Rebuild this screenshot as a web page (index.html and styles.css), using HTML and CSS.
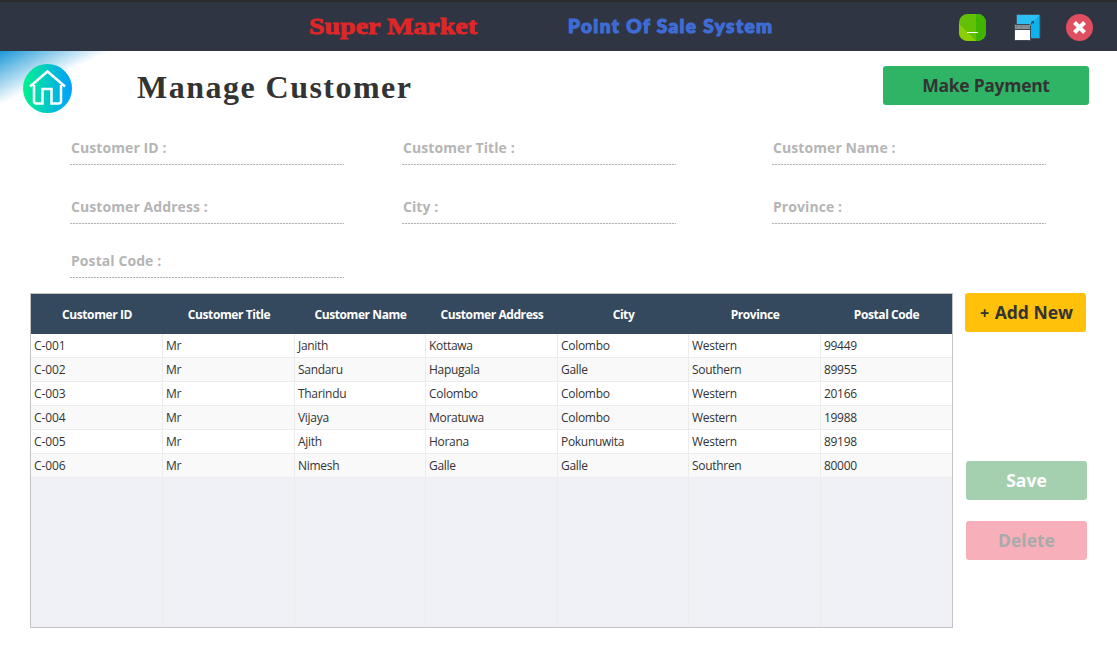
FILE: index.html
```html
<!DOCTYPE html>
<html lang="en">
<head>
<meta charset="utf-8">
<title>Manage Customer</title>
<link rel="stylesheet" href="styles.css">
</head>
<body>
<header class="topbar">
  <svg class="brand" width="180" height="44" viewBox="0 0 180 44"><text class="brand-name" x="1" y="27" textLength="168" lengthAdjust="spacingAndGlyphs">Super Market</text></svg>
  <svg class="tagline" width="215" height="44" viewBox="0 0 215 44"><text class="tagline-text" x="1" y="26" textLength="204" lengthAdjust="spacing">Point Of Sale System</text></svg>
  <div class="window-buttons">
    <svg width="27" height="27" viewBox="0 0 27 27">
      <defs><clipPath id="round"><rect width="27" height="27" rx="8.5"/></clipPath></defs>
      <g clip-path="url(#round)">
        <rect width="27" height="27" fill="#64c005"/>
        <path d="M0 10L17 27H0Z" fill="#8bd000"/>
        <path d="M17 0H27V27H17Z" fill="#3fb500"/>
      </g>
      <rect x="8" y="18" width="11" height="1" fill="#fff"/>
    </svg>
    <svg class="restore" width="27" height="27" viewBox="0 0 27 27">
      <defs><linearGradient id="sky" x1="0" y1="0" x2="1" y2="1"><stop offset=".5" stop-color="#2bc0f3"/><stop offset=".5" stop-color="#0cb2ee"/></linearGradient></defs>
      <rect x="2.500" y=".5" width="23.500" height="24" rx="1" fill="url(#sky)" stroke="#3f5364"/>
      <path d="M17 10l2-2" fill="none" stroke="#34495e" stroke-width="1.200"/>
      <path d="M17 7h3v3Z" fill="#34495e"/>
      <rect x=".5" y="10.500" width="16" height="16" rx="1" fill="#fff" stroke="#3e4650"/>
      <path d="M1 11h15v4H1Z" fill="#858e96"/>
      <path d="M1 15.500h15" stroke="#3e4650"/>
      <path d="M2 12.500h1M7 12.500h1" stroke="#5a636c"/>
    </svg>
    <svg width="27" height="27" viewBox="0 0 27 27">
      <circle cx="13.500" cy="13.500" r="13.500" fill="#e04f5f"/>
      <path d="M8.500 8.500l10 10M18.500 8.500l-10 10" stroke="#fff" stroke-width="4"/>
    </svg>
  </div>
</header>

<main class="page">
  <div class="title-row">
    <svg class="home" width="49" height="49" viewBox="0 0 49 49">
      <defs><linearGradient id="home-fill"><stop offset="0" stop-color="#00f38d"/><stop offset="1" stop-color="#009eff"/></linearGradient></defs>
      <circle cx="24.500" cy="24.500" r="24.500" fill="url(#home-fill)"/>
      <path d="M7 22.500L24.500 7.500L42 22.500M11 21v16q0 2.500 2.500 2.500h6V25h9v14.500h7q2.500 0 2.500-2.500V21" fill="none" stroke="#fff" stroke-width="2.500"/>
    </svg>
    <h1 class="title"><svg width="290" height="50" viewBox="0 0 290 50"><text class="title-text" x="0" y="35" textLength="274" lengthAdjust="spacing">Manage Customer</text></svg></h1>
    <button class="btn btn-pay">Make Payment</button>
  </div>

  <form class="fields">
    <label class="field">Customer ID :</label>
    <label class="field">Customer Title :</label>
    <label class="field">Customer Name :</label>
    <label class="field">Customer Address :</label>
    <label class="field">City :</label>
    <label class="field">Province :</label>
    <label class="field">Postal Code :</label>
  </form>

  <div class="content">
    <div class="table">
      <div class="row head"><span>Customer ID</span><span>Customer Title</span><span>Customer Name</span><span>Customer Address</span><span>City</span><span>Province</span><span>Postal Code</span></div>
      <div class="row"><span>C-001</span><span>Mr</span><span>Janith</span><span>Kottawa</span><span>Colombo</span><span>Western</span><span>99449</span></div>
      <div class="row alt"><span>C-002</span><span>Mr</span><span>Sandaru</span><span>Hapugala</span><span>Galle</span><span>Southern</span><span>89955</span></div>
      <div class="row"><span>C-003</span><span>Mr</span><span>Tharindu</span><span>Colombo</span><span>Colombo</span><span>Western</span><span>20166</span></div>
      <div class="row alt"><span>C-004</span><span>Mr</span><span>Vijaya</span><span>Moratuwa</span><span>Colombo</span><span>Western</span><span>19988</span></div>
      <div class="row"><span>C-005</span><span>Mr</span><span>Ajith</span><span>Horana</span><span>Pokunuwita</span><span>Western</span><span>89198</span></div>
      <div class="row alt"><span>C-006</span><span>Mr</span><span>Nimesh</span><span>Galle</span><span>Galle</span><span>Southren</span><span>80000</span></div>
      <div class="row empty"><span></span><span></span><span></span><span></span><span></span><span></span><span></span></div>
    </div>
    <div class="actions">
      <button class="btn btn-add"><span class="plus">+</span> Add New</button>
      <button class="btn btn-save">Save</button>
      <button class="btn btn-delete">Delete</button>
    </div>
  </div>
</main>
</body>
</html>
```
FILE: styles.css
```css
* { box-sizing: border-box; }
body {
  margin: 0;
  width: 1117px;
  height: 650px;
  overflow: hidden;
  background: #fff;
  color: #333;
  font-family: "Open Sans", "Noto Sans", sans-serif;
}
svg { display: block; flex: none; }
.topbar {
  height: 51px;
  padding: 5px 24px 0 308px;
  border-top: 2px solid #2b2b2b;
  background: #2f3542;
  display: flex;
}
.tagline { margin-left: 79px; }
.brand-name {
  font: bold 24px "Liberation Serif", serif;
  fill: #e02626;
  stroke: #e02626;
  stroke-width: .8px;
}
.tagline-text {
  font: 900 19px Lato, sans-serif;
  fill: #3e6cd6;
  stroke: #3e6cd6;
  stroke-width: 1.2px;
}
.window-buttons {
  margin-left: auto;
  padding-top: 7px;
  display: flex;
}
.restore { margin: 0 25px 0 28px; }
.page {
  height: 599px;
  background: linear-gradient(to bottom right, #1c98d8 0, #fff 50%) 0 0 / 110px 54px no-repeat;
}
.title-row {
  height: 79px;
  padding: 13px 28px 0 23px;
  display: flex;
  align-items: flex-start;
}
.title { margin: -1px 0 0 65px; }
.title-text {
  font: bold 32px "Liberation Serif", serif;
  fill: #333;
}
.btn {
  width: 121px;
  height: 39px;
  padding: 0 0 2px;
  border: 0;
  border-radius: 3px;
  color: #333;
  font: bold 17.500px "Open Sans", "Noto Sans", sans-serif;
}
.btn-pay {
  width: 206px;
  margin: 2px 0 0 auto;
  background: #2fb466;
  letter-spacing: -.3px;
}
.fields {
  height: 163px;
  padding-left: 70px;
  display: grid;
  grid-template-columns: 332px 370px 273px;
  grid-template-rows: 35px 59px 54px;
}
.field {
  width: 274px;
  padding: 0 0 8px 1px;
  display: flex;
  align-items: flex-end;
  color: #b5b5b5;
  font-size: 14px;
  font-weight: bold;
  line-height: 18px;
  letter-spacing: .08px;
  background: repeating-linear-gradient(90deg, #b5b5b5 0 2px, #eee 2px 3px) 0 100% / 100% 1px no-repeat;
}
.content {
  padding-left: 30px;
  display: flex;
  gap: 12px;
}
.table {
  width: 923px;
  height: 335px;
  border: 1px solid #c3c3c3;
  background: #f0f1f6;
  display: flex;
  flex-direction: column;
}
.row {
  height: 24px;
  flex: none;
  display: grid;
  grid-template-columns: 132px 132px 131px 132px 131px 132px 131px;
  border-bottom: 1px solid #ececec;
  background: #fff;
  font-size: 12px;
  line-height: 23px;
  letter-spacing: -.3px;
}
.row span {
  padding-left: 3px;
  border-right: 1px solid #ececec;
  white-space: nowrap;
}
.row span:last-child { border-right: 0; }
.row span:first-child { letter-spacing: -.1px; }
.alt { background: #f9f9f9; }
.head {
  height: 40px;
  border: 0;
  background: #34495e;
  color: #fff;
  font-weight: bold;
  line-height: 41px;
  text-align: center;
}
.head span, .head span:first-child, .head span:last-child {
  border: 0;
  padding: 0;
  letter-spacing: -.42px;
}
.empty { height: auto; flex: 1; border: 0; background: none; }
.actions { display: flex; flex-direction: column; }
.btn-add { padding-left: 2px; background: #ffc10a; }
.plus { margin-right: 1px; font-size: 16px; }
.btn-save { margin: 129px 0 21px 1px; background: #a5d0af; color: #fff; }
.btn-delete { margin-left: 1px; background: #f7b0ba; color: #aaa; }
```
